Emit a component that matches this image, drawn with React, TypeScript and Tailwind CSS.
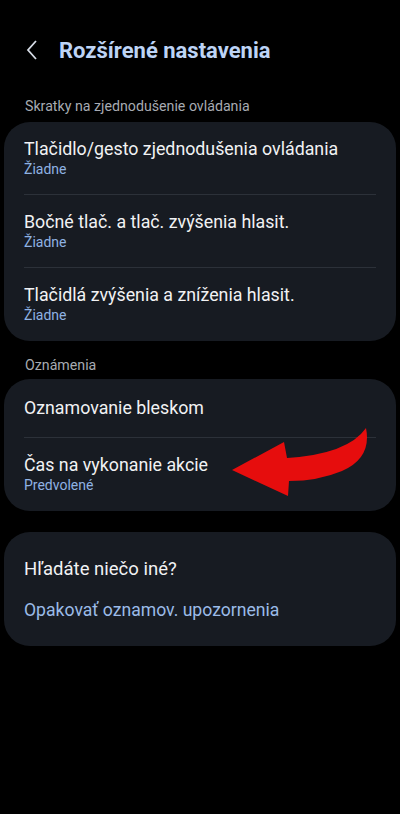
import React from "react";

type Item = { title: string; sub?: string };

const shortcuts: Item[] = [
  { title: "Tlačidlo/gesto zjednodušenia ovládania", sub: "Žiadne" },
  { title: "Bočné tlač. a tlač. zvýšenia hlasit.", sub: "Žiadne" },
  { title: "Tlačidlá zvýšenia a zníženia hlasit.", sub: "Žiadne" },
];

const notices: Item[] = [
  { title: "Oznamovanie bleskom" },
  { title: "Čas na vykonanie akcie", sub: "Predvolené" },
];

function Row({ item, last }: { item: Item; last: boolean }) {
  return (
    <div className="px-5">
      <div
        className={
          "flex flex-col justify-center " +
          (item.sub ? "h-[73px] " : "h-[59px] ") +
          (last ? "" : "border-b border-[#2c3139]")
        }
      >
        <div className="text-[17.8px] leading-[22px] text-[#f1f2f4]">{item.title}</div>
        {item.sub && (
          <div className="text-[14px] leading-[19px] text-[#8fb2e3]">{item.sub}</div>
        )}
      </div>
    </div>
  );
}

function Card({ items }: { items: Item[] }) {
  return (
    <div className="mx-[4px] rounded-[26px] bg-[#171b22]">
      {items.map((it, i) => (
        <Row key={it.title} item={it} last={i === items.length - 1} />
      ))}
    </div>
  );
}

export default function App() {
  return (
    <div
      className="relative min-h-[814px] w-[400px] bg-black"
      style={{ fontFamily: "Roboto, 'Noto Sans', sans-serif" }}
    >
      {/* header */}
      <div className="flex h-[96px] items-center pl-[25px] pt-[4px]">
        <svg width="14" height="22" viewBox="0 0 14 22" className="mr-[20px]">
          <path d="M11 2 L3 11 L11 20" fill="none" stroke="#d6dce6" strokeWidth="1.8" />
        </svg>
        <h1 className="text-[22px] font-bold text-[#bdd4f6]">Rozšírené nastavenia</h1>
      </div>

      <div className="pl-[25px] pb-[6px] text-[14.2px] leading-[20px] text-[#a7abb2]">
        Skratky na zjednodušenie ovládania
      </div>
      <Card items={shortcuts} />

      <div className="pl-[25px] pt-[14px] pb-[4px] text-[14.2px] leading-[20px] text-[#a7abb2]">
        Oznámenia
      </div>
      <Card items={notices} />

      <div className="mx-[4px] mt-[21px] flex h-[114px] flex-col justify-center gap-[19px] rounded-[26px] bg-[#171b22] px-5">
        <div className="text-[18.5px] leading-[22px] text-[#f1f2f4]">Hľadáte niečo iné?</div>
        <div className="text-[17.6px] leading-[22px] text-[#9bbbe8]">Opakovať oznamov. upozornenia</div>
      </div>

      {/* annotation arrow */}
      <svg
        className="pointer-events-none absolute left-0 top-0"
        width="400"
        height="814"
        viewBox="0 0 400 814"
      >
        <path
          d="M232,470 L284,442 L287,458 Q348,454 366,428 Q372,458 342,471 Q318,481 289,481 L288,496 Z"
          fill="#e60d0d"
        />
      </svg>
    </div>
  );
}
